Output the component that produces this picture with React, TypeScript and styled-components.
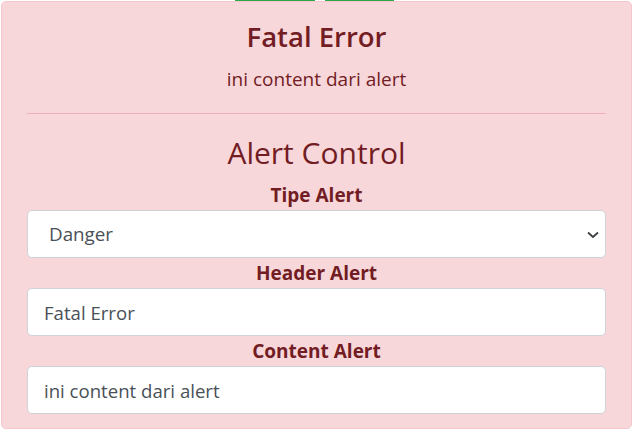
import React from "react";
import styled, { createGlobalStyle } from "styled-components";

const Global = createGlobalStyle`
  html, body { margin: 0; padding: 0; background: #fff; }
  body { font-family: "Open Sans", "Noto Sans", sans-serif; }
  * { box-sizing: border-box; }
`;

const Page = styled.div`
  width: 633px;
  display: flex;
  flex-direction: column;
`;

const ButtonRow = styled.div`
  display: flex;
  justify-content: center;
  gap: 10px;
  padding-right: 5px;
  height: 1px;
`;

const ButtonEdge = styled.div<{ $w: number }>`
  width: ${(p) => p.$w}px;
  height: 1px;
  background: #28a745;
`;

const Alert = styled.div`
  margin: 0 1px;
  width: 631px;
  height: 428px;
  background: #f8d7da;
  border: 1px solid #f5c6cb;
  border-radius: 5px;
  color: #721c24;
  padding: 18px 25px 13px;
  display: flex;
  flex-direction: column;
`;

const Title = styled.h3`
  margin: 0;
  font-size: 27.5px;
  font-weight: 600;
  line-height: 34px;
  text-align: center;
`;

const Lead = styled.p`
  margin: 10px 0 0;
  font-size: 19px;
  font-weight: 400;
  line-height: 30px;
  text-align: center;
`;

const Rule = styled.hr`
  margin: 19px 0 0;
  border: 0;
  border-top: 1px solid #f1b0b7;
`;

const SectionTitle = styled.h2`
  margin: 20px 0 8px;
  font-size: 30px;
  font-weight: 500;
  line-height: 38px;
  text-align: center;
`;

const Label = styled.label`
  display: block;
  font-size: 19px;
  font-weight: 700;
  line-height: 30px;
  text-align: center;
`;

const SelectWrap = styled.div`
  position: relative;
`;

const Select = styled.select`
  appearance: none;
  width: 100%;
  height: 48px;
  padding: 0 16px 0 21px;
  font-family: inherit;
  font-size: 18.8px;
  color: #495057;
  background: #fff;
  border: 1px solid #ced4da;
  border-radius: 5px;
  outline: none;
`;

const Chevron = styled.svg`
  position: absolute;
  right: 7px;
  top: 21px;
  pointer-events: none;
`;

const Input = styled.input`
  width: 100%;
  height: 48px;
  padding: 0 16px;
  font-family: inherit;
  font-size: 18.6px;
  color: #495057;
  background: #fff;
  border: 1px solid #ced4da;
  border-radius: 5px;
  outline: none;
`;

export default function App() {
  return (
    <Page>
      <Global />
      <ButtonRow>
        <ButtonEdge $w={80} />
        <ButtonEdge $w={69} />
      </ButtonRow>
      <Alert>
        <Title>Fatal Error</Title>
        <Lead>ini content dari alert</Lead>
        <Rule />
        <SectionTitle>Alert Control</SectionTitle>
        <Label>Tipe Alert</Label>
        <SelectWrap>
          <Select defaultValue="danger">
            <option value="primary">Primary</option>
            <option value="success">Success</option>
            <option value="danger">Danger</option>
            <option value="warning">Warning</option>
          </Select>
          <Chevron width="12" height="8" viewBox="0 0 12 8">
            <path d="M1 1.5 L6 6 L11 1.5" fill="none" stroke="#3c4043" strokeWidth="1.8" />
          </Chevron>
        </SelectWrap>
        <Label>Header Alert</Label>
        <Input defaultValue="Fatal Error" />
        <Label>Content Alert</Label>
        <Input defaultValue="ini content dari alert" />
      </Alert>
    </Page>
  );
}
